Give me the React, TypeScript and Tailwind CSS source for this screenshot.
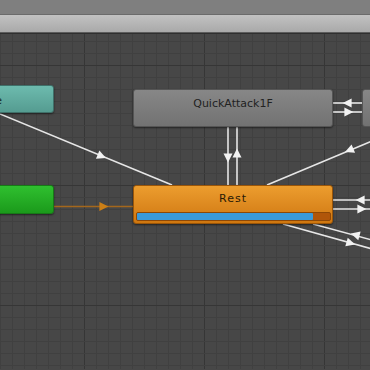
import React from 'react';

// canvas starts 35px below the page top; all diagram coords below are canvas coords
const W = 370;
const H = 335;

type Pt = [number, number];

function arrowHead(cx: number, cy: number, dx: number, dy: number, size = 9) {
  const len = Math.hypot(dx, dy);
  const ux = dx / len;
  const uy = dy / len;
  const px = -uy;
  const py = ux;
  const tip: Pt = [cx + ux * size * 0.6, cy + uy * size * 0.6];
  const b1: Pt = [cx - ux * size * 0.4 + px * size * 0.5, cy - uy * size * 0.4 + py * size * 0.5];
  const b2: Pt = [cx - ux * size * 0.4 - px * size * 0.5, cy - uy * size * 0.4 - py * size * 0.5];
  return [tip, b1, b2].map((p) => p.join(',')).join(' ');
}

const links = [
  // any state -> rest
  { a: [0, 80] as Pt, b: [172, 151] as Pt, at: [101, 122] as Pt, dir: 1 },
  // quick attack <-> rest
  { a: [228, 93] as Pt, b: [228, 151] as Pt, at: [228, 123] as Pt, dir: 1 },
  { a: [237, 93] as Pt, b: [237, 151] as Pt, at: [237, 120] as Pt, dir: -1 },
  // rest <-> upper right
  { a: [267, 151] as Pt, b: [372, 107] as Pt, at: [350, 116] as Pt, dir: -1 },
  // quick attack <-> right node
  { a: [333, 69] as Pt, b: [362, 69] as Pt, at: [348, 69] as Pt, dir: -1 },
  { a: [333, 78] as Pt, b: [362, 78] as Pt, at: [348, 78] as Pt, dir: 1 },
  // rest <-> right
  { a: [333, 166] as Pt, b: [372, 166] as Pt, at: [361, 166] as Pt, dir: -1 },
  { a: [333, 175] as Pt, b: [372, 175] as Pt, at: [361, 175] as Pt, dir: 1 },
  // rest <-> lower right
  { a: [283, 190] as Pt, b: [372, 215] as Pt, at: [350, 209] as Pt, dir: 1 },
  { a: [313, 190] as Pt, b: [372, 206] as Pt, at: [356, 201] as Pt, dir: -1 },
];

function Grid() {
  const lines: React.ReactNode[] = [];
  for (let x = 0; x <= W; x += 12) {
    const major = (x - 84) % 120 === 0;
    lines.push(
      <line key={'v' + x} x1={x + 0.5} y1={0} x2={x + 0.5} y2={H} stroke={major ? '#363636' : '#404040'} strokeWidth={1} />
    );
  }
  for (let y = 7; y <= H; y += 12) {
    const major = (y - 31) % 120 === 0;
    lines.push(
      <line key={'h' + y} x1={0} y1={y + 0.5} x2={W} y2={y + 0.5} stroke={major ? '#363636' : '#404040'} strokeWidth={1} />
    );
  }
  return (
    <svg className="absolute inset-0" width={W} height={H}>
      {lines}
    </svg>
  );
}

function Links() {
  return (
    <svg className="absolute inset-0" width={W} height={H}>
      {/* entry -> rest */}
      <line x1={54} y1={172.5} x2={133} y2={172.5} stroke="#a4671c" strokeWidth={1.5} />
      <polygon points={arrowHead(103, 172.5, 1, 0)} fill="#cc7f16" />
      {links.map((l, i) => {
        const dx = (l.b[0] - l.a[0]) * l.dir;
        const dy = (l.b[1] - l.a[1]) * l.dir;
        return (
          <g key={i}>
            <line x1={l.a[0]} y1={l.a[1]} x2={l.b[0]} y2={l.b[1]} stroke="#e6e6e6" strokeWidth={1.6} />
            <polygon points={arrowHead(l.at[0], l.at[1], dx, dy)} fill="#f2f2f2" />
          </g>
        );
      })}
    </svg>
  );
}

export default function App() {
  return (
    <div className="w-[370px] h-[370px] overflow-hidden bg-[#464646] flex flex-col" style={{ fontFamily: '"DejaVu Sans", Verdana, sans-serif' }}>
      {/* window chrome */}
      <div className="h-[15px] bg-[#7f7f7f] border-b border-[#6b6b6b]" />
      <div className="h-[18px] bg-gradient-to-b from-[#c2c2c2] to-[#a9a9a9] border-b border-[#5c5c5c]" />
      <div className="h-[1px] bg-[#2f2f2f]" />

      {/* graph canvas */}
      <div className="relative flex-1 bg-[#474747]">
        <Grid />
        <Links />

        {/* Any State */}
        <div className="absolute left-[-146px] top-[51px] w-[200px] h-[28px] rounded-[3px] bg-gradient-to-b from-[#6dbbae] to-[#559c91] border border-[#3f7069] shadow-[0_1px_2px_rgba(0,0,0,0.5)]">
          <span className="absolute right-[51px] top-[7px] text-[11px] text-[#1c2b29]">Any State</span>
        </div>

        {/* Entry */}
        <div className="absolute left-[-146px] top-[151px] w-[200px] h-[29px] rounded-[3px] bg-gradient-to-b from-[#2fc02f] to-[#1b9a1b] border border-[#177a17] shadow-[0_1px_2px_rgba(0,0,0,0.5)]" />

        {/* QuickAttack1F */}
        <div className="absolute left-[133px] top-[55px] w-[200px] h-[38px] rounded-[3px] bg-gradient-to-b from-[#878787] to-[#727272] border border-[#555] shadow-[0_1px_2px_rgba(0,0,0,0.5)] flex justify-center pt-[6px] text-[11px] text-[#222]">
          QuickAttack1F
        </div>

        {/* offscreen right node */}
        <div className="absolute left-[362px] top-[55px] w-[200px] h-[38px] rounded-[3px] bg-gradient-to-b from-[#878787] to-[#727272] border border-[#555]" />

        {/* Rest (active) */}
        <div className="absolute left-[133px] top-[151px] w-[200px] h-[39px] rounded-[3px] bg-gradient-to-b from-[#ec9d2e] to-[#cf770f] border border-[#9a5508] shadow-[0_1px_2px_rgba(0,0,0,0.5)] flex flex-col items-center">
          <span className="mt-[5px] text-[11px] tracking-[1px] text-[#2a1a05]">Rest</span>
          <div className="mt-auto mb-[2px] w-[195px] h-[9px] rounded-[2px] bg-[#b0560a] border border-[#8e4806] flex">
            <div className="w-[176px] h-full bg-[#3b9ad9] rounded-[1px]" />
          </div>
        </div>
      </div>
    </div>
  );
}
